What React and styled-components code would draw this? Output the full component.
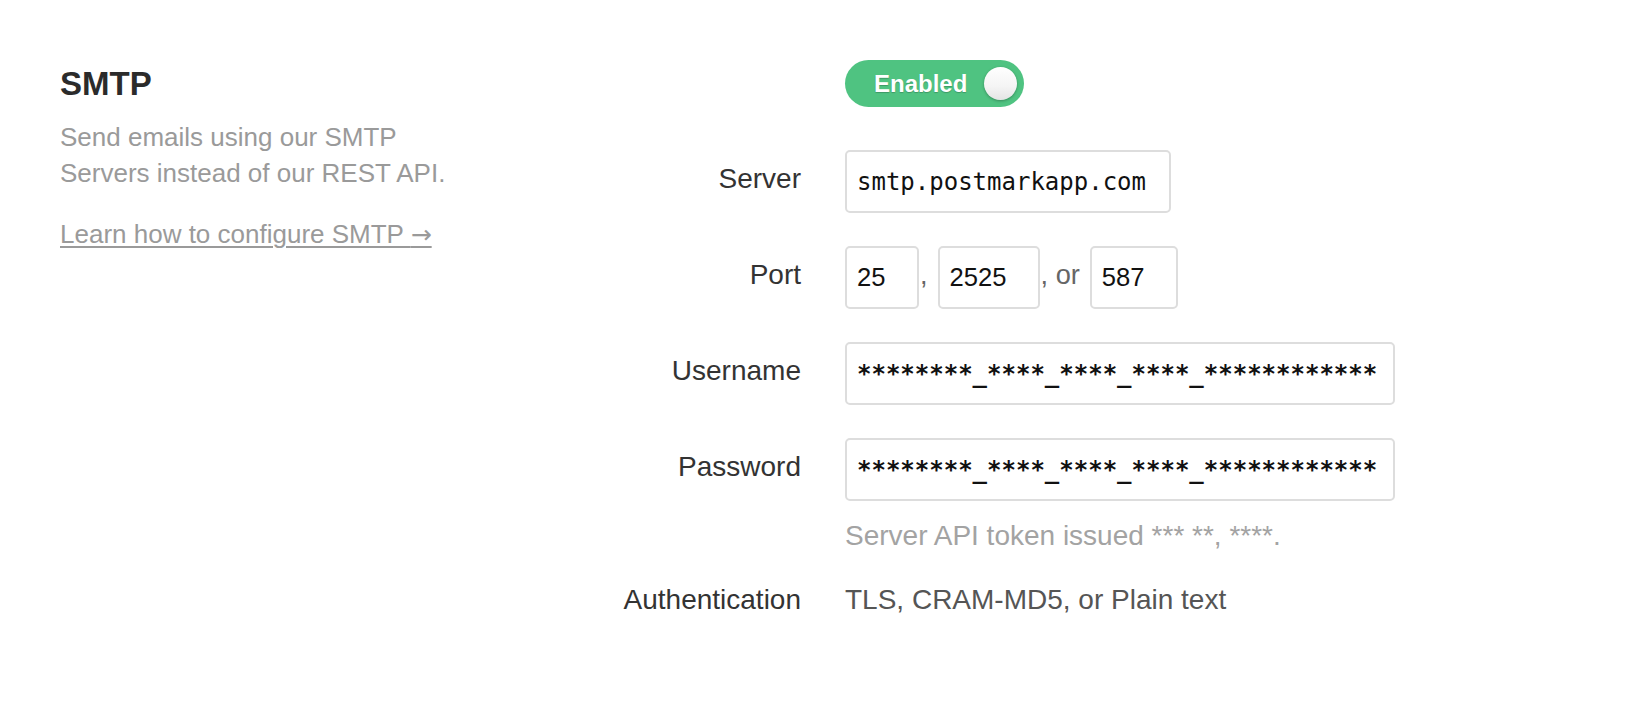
import React from "react";
import styled, { createGlobalStyle } from "styled-components";

const GlobalStyle = createGlobalStyle`
  html, body {
    margin: 0;
    padding: 0;
    background: #ffffff;
  }
  body {
    font-family: "Liberation Sans", Arial, Helvetica, sans-serif;
    -webkit-font-smoothing: antialiased;
  }
`;

const Page = styled.div`
  display: flex;
  align-items: flex-start;
  padding: 60px 0 0 60px;
  width: 1636px;
  height: 722px;
  box-sizing: border-box;
`;

const Intro = styled.section`
  width: 440px;
  flex-shrink: 0;
`;

const Title = styled.h2`
  margin: 0;
  font-size: 33px;
  line-height: 48px;
  font-weight: 700;
  color: #2b2b2b;
`;

const Description = styled.p`
  margin: 11px 0 0;
  max-width: 405px;
  font-size: 26px;
  line-height: 36px;
  color: #9a9a9a;
`;

const LearnLink = styled.a`
  display: inline-block;
  margin-top: 25px;
  font-size: 26px;
  line-height: 36px;
  color: #9a9a9a;
  text-decoration: underline;
  text-underline-offset: 3px;
  text-decoration-thickness: 2px;
  cursor: pointer;
`;

const Arrow = styled.span`
  font-family: "DejaVu Sans", sans-serif;
  font-size: 25px;
`;

const Form = styled.div`
  display: grid;
  grid-template-columns: 301px auto;
  column-gap: 44px;
  row-gap: 33px;
  align-items: start;
`;

const Label = styled.div`
  font-size: 28px;
  line-height: ${(p) => (p.$compact ? "29px" : "57px")};
  color: #333333;
  text-align: right;
  white-space: nowrap;
`;

const Toggle = styled.div`
  grid-column: 2;
  display: flex;
  align-items: center;
  justify-content: space-between;
  box-sizing: border-box;
  width: 179px;
  height: 47px;
  margin-bottom: 10px;
  padding: 0 7px 0 29px;
  border-radius: 24px;
  background: #4fc381;
`;

const ToggleText = styled.span`
  font-size: 24px;
  font-weight: 700;
  color: #ffffff;
  text-shadow: 0 1px 1px rgba(0, 0, 0, 0.22);
`;

const Knob = styled.span`
  width: 33px;
  height: 33px;
  border-radius: 50%;
  background: linear-gradient(#ffffff 0%, #f4f4f4 60%, #e4e4e4 100%);
  box-shadow: 0 1px 3px rgba(0, 0, 0, 0.3);
`;

const Input = styled.input`
  box-sizing: border-box;
  width: ${(p) => p.$w}px;
  height: 63px;
  margin: 0;
  padding: 0 10px;
  border: 2px solid #dddddd;
  border-radius: 5px;
  background: #ffffff;
  color: #111111;
  font-family: ${(p) =>
    p.$sans
      ? '"Liberation Sans", Arial, sans-serif'
      : '"DejaVu Sans Mono", "Liberation Mono", monospace'};
  font-size: ${(p) => (p.$sans ? "25.6px" : "24px")};
  font-weight: ${(p) => (p.$heavy ? 700 : 400)};
  outline: none;
`;

const PortRow = styled.div`
  display: flex;
  align-items: flex-start;
`;

const Sep = styled.span`
  margin: 0 10px 0 1px;
  font-size: 27.2px;
  line-height: 58px;
  color: #666666;
`;

const FieldStack = styled.div`
  display: flex;
  flex-direction: column;
  align-items: flex-start;
`;

const Hint = styled.div`
  margin-top: 18px;
  font-size: 28px;
  line-height: 33px;
  color: #a3a3a3;
`;

const Value = styled.div`
  font-size: 28px;
  line-height: 29px;
  color: #555555;
`;

const TOKEN = "********_****_****_****_************";

export default function App() {
  return (
    <>
      <GlobalStyle />
      <Page>
        <Intro>
          <Title>SMTP</Title>
          <Description>
            Send emails using our SMTP Servers instead of our REST API.
          </Description>
          <LearnLink>
            Learn how to configure SMTP <Arrow>→</Arrow>
          </LearnLink>
        </Intro>

        <Form>
          <Toggle>
            <ToggleText>Enabled</ToggleText>
            <Knob />
          </Toggle>

          <Label>Server</Label>
          <Input $w={326} value="smtp.postmarkapp.com" readOnly />

          <Label>Port</Label>
          <PortRow>
            <Input $w={74} $sans value="25" readOnly />
            <Sep>,</Sep>
            <Input $w={102} $sans value="2525" readOnly />
            <Sep>, or</Sep>
            <Input $w={88} $sans value="587" readOnly />
          </PortRow>

          <Label>Username</Label>
          <Input $w={550} $heavy value={TOKEN} readOnly />

          <Label>Password</Label>
          <FieldStack>
            <Input $w={550} $heavy value={TOKEN} readOnly />
            <Hint>Server API token issued *** **, ****.</Hint>
          </FieldStack>

          <Label $compact>Authentication</Label>
          <Value>TLS, CRAM-MD5, or Plain text</Value>
        </Form>
      </Page>
    </>
  );
}
